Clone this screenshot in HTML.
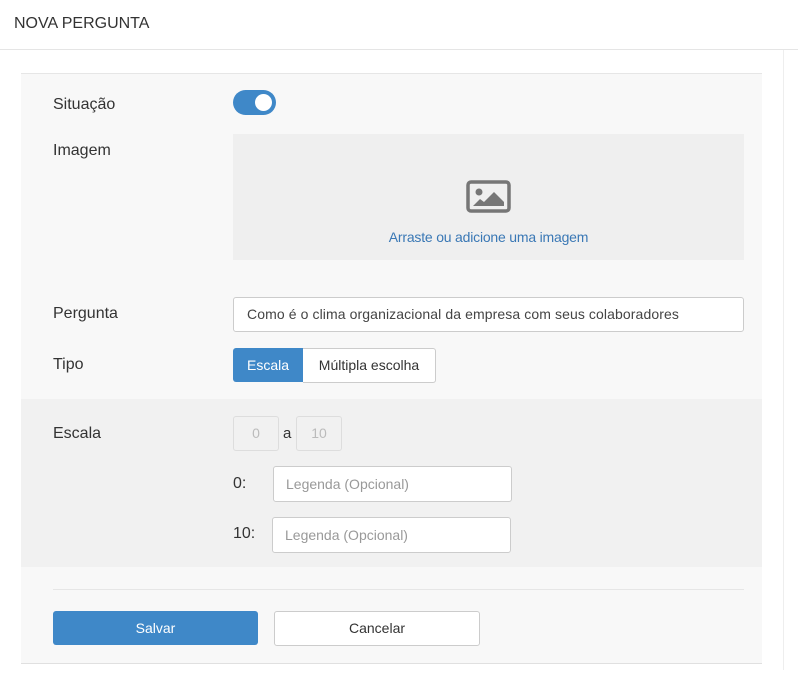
<!DOCTYPE html>
<html><head><style>
body{margin:0;width:798px;height:684px;background:#fff;font-family:"Liberation Sans",sans-serif;color:#333;position:relative;overflow:hidden}
.a{position:absolute}
.lbl{font-size:16px;color:#333}
</style></head><body>
<div class="a" style="left:14px;top:15px;font-size:16px;color:#333">NOVA PERGUNTA</div>
<div class="a" style="left:0;top:49px;width:798px;height:1px;background:#e5e5e5"></div>
<div class="a" style="left:783px;top:50px;width:1px;height:620px;background:#eee"></div>
<div class="a" style="left:21px;top:73px;width:741px;height:589px;background:#f8f8f8;border-top:1px solid #e6e6e6;border-bottom:1px solid #e0e0e0"></div>
<div class="a" style="left:21px;top:399px;width:741px;height:168px;background:#f1f1f1"></div>
<div class="a lbl" style="left:53px;top:96px">Situação</div>
<div class="a" style="left:233px;top:90px;width:43px;height:25px;border-radius:13px;background:#3f88c8"></div>
<div class="a" style="left:255px;top:94px;width:17px;height:17px;border-radius:50%;background:#fff"></div>
<div class="a lbl" style="left:53px;top:142px">Imagem</div>
<div class="a" style="left:233px;top:134px;width:511px;height:126px;background:#efefef"></div>
<svg class="a" style="left:466px;top:180px" width="45" height="33" viewBox="0 0 45 33"><rect x="2" y="2" width="41" height="29" rx="3" fill="none" stroke="#767676" stroke-width="3.5"/><circle cx="13" cy="12" r="3.5" fill="#767676"/><path d="M7 26 L14 19 L18 22 L28 12 L38 22 L38 26 Z" fill="#767676"/></svg>
<div class="a" style="left:233px;top:229px;width:511px;text-align:center;font-size:14px;color:#3a78b5;letter-spacing:-0.2px">Arraste ou adicione uma imagem</div>
<div class="a lbl" style="left:53px;top:305px">Pergunta</div>
<div class="a" style="left:233px;top:297px;width:509px;height:33px;background:#fff;border:1px solid #ccc;border-radius:3px;font-size:14px;line-height:33px;text-indent:13px;color:#444;letter-spacing:0.1px">Como é o clima organizacional da empresa com seus colaboradores</div>
<div class="a lbl" style="left:53px;top:356px">Tipo</div>
<div class="a" style="left:233px;top:348px;width:70px;height:34px;background:#3f88c8;border-radius:3px 0 0 3px;color:#fff;font-size:14px;line-height:34px;text-align:center">Escala</div>
<div class="a" style="left:303px;top:348px;width:132px;height:33px;background:#fff;border:1px solid #ccc;border-left:none;border-radius:0 3px 3px 0;font-size:14px;line-height:33px;text-align:center;color:#333">Múltipla escolha</div>
<div class="a lbl" style="left:53px;top:425px">Escala</div>
<div class="a" style="left:233px;top:416px;width:44px;height:33px;border:1px solid #ddd;border-radius:3px;font-size:14px;line-height:33px;text-align:center;color:#bbb">0</div>
<div class="a" style="left:283px;top:425px;font-size:15px">a</div>
<div class="a" style="left:296px;top:416px;width:44px;height:33px;border:1px solid #ddd;border-radius:3px;font-size:14px;line-height:33px;text-align:center;color:#bbb">10</div>
<div class="a lbl" style="left:233px;top:475px">0:</div>
<div class="a" style="left:273px;top:466px;width:237px;height:34px;background:#fff;border:1px solid #ccc;border-radius:3px;font-size:14px;line-height:34px;text-indent:12px;color:#999">Legenda (Opcional)</div>
<div class="a lbl" style="left:233px;top:525px">10:</div>
<div class="a" style="left:272px;top:517px;width:237px;height:34px;background:#fff;border:1px solid #ccc;border-radius:3px;font-size:14px;line-height:34px;text-indent:12px;color:#999">Legenda (Opcional)</div>
<div class="a" style="left:53px;top:589px;width:691px;height:1px;background:#e6e6e6"></div>
<div class="a" style="left:53px;top:611px;width:205px;height:34px;background:#3f88c8;border-radius:3px;color:#fff;font-size:14px;line-height:34px;text-align:center">Salvar</div>
<div class="a" style="left:274px;top:611px;width:204px;height:33px;background:#fff;border:1px solid #ccc;border-radius:3px;font-size:14px;line-height:33px;text-align:center;color:#333">Cancelar</div>
</body></html>
